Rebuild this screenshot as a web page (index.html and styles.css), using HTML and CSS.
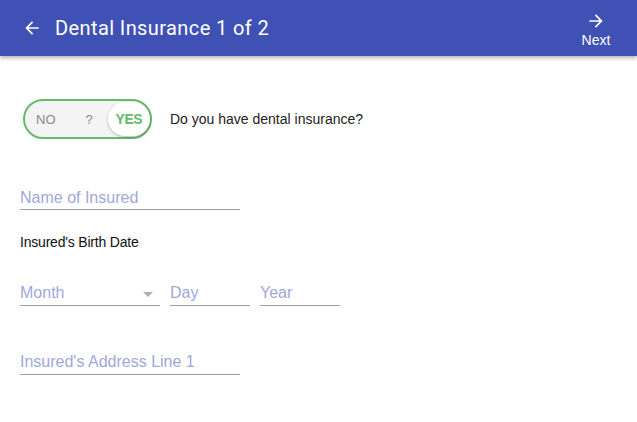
FILE: index.html
```html
<!DOCTYPE html>
<html>
<head>
<meta charset="utf-8">
<link rel="stylesheet" href="styles.css">
</head>
<body>
<header class="appbar">
  <div class="appbar-left">
    <svg class="back" width="20" height="20" viewBox="0 0 24 24"><path d="M20 11H7.83l5.59-5.59L12 4l-8 8 8 8 1.41-1.41L7.83 13H20v-2z" fill="#fff"/></svg>
    <h1 class="title">Dental Insurance 1 of 2</h1>
  </div>
  <div class="next">
    <svg width="20" height="20" viewBox="0 0 24 24"><path d="M12 4l-1.41 1.41L16.17 11H4v2h12.17l-5.58 5.59L12 20l8-8z" fill="#fff"/></svg>
    <span class="next-label">Next</span>
  </div>
</header>
<main class="content">
  <div class="toggle-row">
    <div class="toggle">
      <span class="opt no">NO</span>
      <span class="opt q">?</span>
      <span class="opt yes">YES</span>
    </div>
    <span class="question">Do you have dental insurance?</span>
  </div>
  <div class="field wide name"><span class="ph">Name of Insured</span></div>
  <div class="label">Insured's Birth Date</div>
  <div class="date-row">
    <div class="field month"><span class="ph">Month</span><span class="caret"></span></div>
    <div class="field day"><span class="ph">Day</span></div>
    <div class="field year"><span class="ph">Year</span></div>
  </div>
  <div class="field wide addr"><span class="ph">Insured's Address Line 1</span></div>
</main>
</body>
</html>
```
FILE: styles.css
```css
html, body { margin: 0; padding: 0; background: #fff; }
body { width: 637px; height: 422px; overflow: hidden; font-family: "Liberation Sans", Arial, sans-serif; }
.appbar {
  height: 56px;
  background: #3f51b5;
  display: flex;
  align-items: center;
  justify-content: space-between;
  box-shadow: 0 2px 4px rgba(0,0,0,0.3);
  position: relative;
}
.appbar-left { display: flex; align-items: center; padding-left: 22px; }
.back { display: block; }
.title {
  margin: 0 0 0 13px;
  font-family: Roboto, sans-serif;
  font-weight: 400;
  font-size: 20px;
  color: #fff;
  letter-spacing: 0.4px;
}
.next {
  display: flex;
  flex-direction: column;
  align-items: center;
  width: 40px;
  margin-right: 21px;
  padding-top: 2px;
  color: #fff;
}
.next svg { display: block; }
.next-label { font-size: 14px; margin-top: 1px; color: #fff; }
.content { padding: 43px 20px 0 20px; }
.toggle-row { display: flex; align-items: center; margin-left: 3px; }
.toggle {
  width: 125px;
  height: 36px;
  border: 2px solid #66bb6a;
  border-radius: 20px;
  background: #f4f4f4;
  display: flex;
  align-items: center;
  position: relative;
  font-size: 13px;
}
.opt { color: #888; }
.no { margin-left: 11px; }
.q { margin-left: 30px; }
.yes {
  margin-left: 15px;
  background: #fff;
  color: #66bb6a;
  font-weight: bold;
  font-size: 14px;
  letter-spacing: -0.5px;
  height: 34px;
  width: 44px;
  border-radius: 17px;
  display: flex;
  align-items: center;
  justify-content: center;
  box-shadow: 0 1px 3px rgba(0,0,0,0.25);
}
.question { margin-left: 18px; font-size: 14px; color: #222; }
.field {
  border-bottom: 1px solid #9e9e9e;
  height: 24px;
  box-sizing: border-box;
  display: flex;
  align-items: flex-end;
  position: relative;
}
.ph { font-size: 16px; color: #9fa8da; line-height: 18px; padding-bottom: 3px; }
.name .ph { padding-bottom: 2px; }
.wide { width: 220px; }
.name { margin-top: 47px; }
.label { margin-top: 24px; font-size: 14px; color: #111; letter-spacing: -0.2px; }
.date-row { display: flex; gap: 10px; margin-top: 32px; }
.month { width: 140px; }
.day { width: 80px; }
.year { width: 80px; }
.caret {
  position: absolute;
  right: 7px;
  bottom: 8px;
  width: 0; height: 0;
  border-left: 5px solid transparent;
  border-right: 5px solid transparent;
  border-top: 5px solid #b0b0b0;
}
.addr { margin-top: 45px; }
```
